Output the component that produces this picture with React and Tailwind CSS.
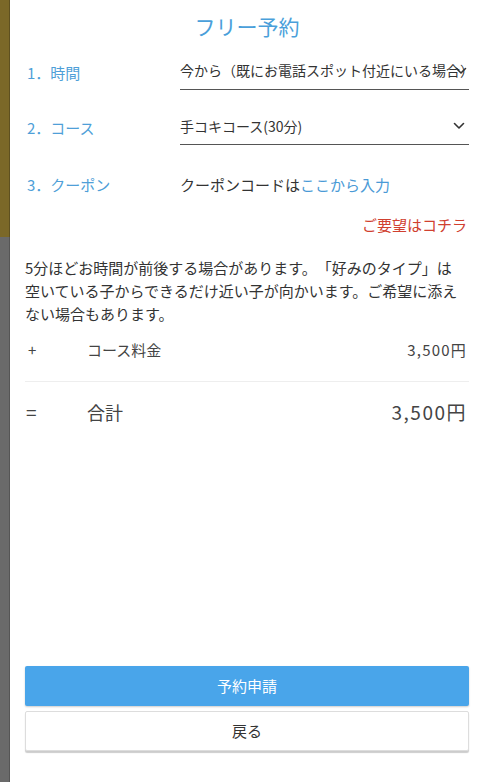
import React from "react";

const font = { fontFamily: '"Noto Sans CJK JP", "Noto Sans", sans-serif' };

function Chevron() {
  return (
    <svg width="12" height="8" viewBox="0 0 12 8" fill="none">
      <path d="M1.5 1.5 L6 6 L10.5 1.5" stroke="#333" strokeWidth="1.6" strokeLinecap="round" strokeLinejoin="round" />
    </svg>
  );
}

export default function App() {
  return (
    <div className="flex h-[782px] w-[480px] overflow-hidden [text-spacing-trim:space-all]" style={font}>
      <div className="flex w-[10px] shrink-0 flex-col">
        <div className="h-[237px] border-r border-[#5e5020] bg-[#7b6828]" />
        <div className="flex-1 border-r border-[#555] bg-[#6a6a6a]" />
      </div>
      <div className="flex min-w-0 flex-1 flex-col rounded-tl-[5px] bg-white pl-[15px] pr-[11px] text-[#333]">
        <div className="pt-[11px] text-center text-[21px] leading-[30px] text-[#4a9fda]">フリー予約</div>

        <div className="mt-[18px] flex items-end">
          <div className="w-[155px] shrink-0 pb-[7px] pl-[2px] text-[15px] leading-[20px] text-[#4f9fd8]">1．時間</div>
          <div className="relative min-w-0 flex-1 border-b border-[#555] pb-[9px] pt-[1px]">
            <div className="overflow-hidden whitespace-nowrap pr-[2px] text-[14px] leading-[20px]">今から（既にお電話スポット付近にいる場合）</div>
            <span className="absolute right-[2px] top-[8px]"><Chevron /></span>
          </div>
        </div>

        <div className="mt-[25px] flex items-end">
          <div className="w-[155px] shrink-0 pb-[7px] pl-[2px] text-[15px] leading-[20px] text-[#4f9fd8]">2．コース</div>
          <div className="flex min-w-0 flex-1 items-center justify-between border-b border-[#555] pb-[8px] pt-[1px]">
            <span className="text-[14px] leading-[20px]">手コキコース(30分)</span>
            <span className="mr-[4px] flex items-center"><Chevron /></span>
          </div>
        </div>

        <div className="mt-[30px] flex items-center">
          <div className="w-[155px] shrink-0 pl-[2px] text-[15px] leading-[20px] text-[#4f9fd8]">3．クーポン</div>
          <div className="text-[15px] leading-[20px]">
            クーポンコードは<span className="text-[#4a9ad6]">ここから入力</span>
          </div>
        </div>

        <div className="mt-[20px] pr-[2px] text-right text-[15px] leading-[20px] text-[#d0402f]">ご要望はコチラ</div>

        <p className="mt-[21px] pr-[7px] text-[15px] leading-[23px] text-[#333]">
          5分ほどお時間が前後する場合があります。「好みのタイプ」は空いている子からできるだけ近い子が向かいます。ご希望に添えない場合もあります。
        </p>

        <div className="mt-[15px] flex items-center text-[15px] leading-[20px] text-[#444]">
          <span className="w-[62px] pl-[3px]">+</span>
          <span className="flex-1">コース料金</span>
          <span className="pr-[2px] tracking-[1.2px]">3,500円</span>
        </div>

        <div className="mt-[21px] border-t border-[#eee]" />

        <div className="mt-[18px] flex items-center text-[#444]">
          <span className="w-[62px] pl-[1px] text-[19px] leading-[24px]">=</span>
          <span className="flex-1 text-[18px] leading-[24px]">合計</span>
          <span className="pr-[2px] text-[19px] leading-[24px] tracking-[1.5px]">3,500円</span>
        </div>

        <div className="flex-1" />

        <button className="h-[40px] w-full rounded-[2px] bg-[#49a5ea] text-[15px] text-white shadow-[0_1px_2px_rgba(0,0,0,0.2)]">予約申請</button>
        <button className="mt-[5px] h-[40px] w-full rounded-[2px] border border-[#ddd] bg-white text-[15px] text-[#333] shadow-[0_2px_1px_rgba(0,0,0,0.2)]">戻る</button>
        <div className="h-[31px]" />
      </div>
    </div>
  );
}
